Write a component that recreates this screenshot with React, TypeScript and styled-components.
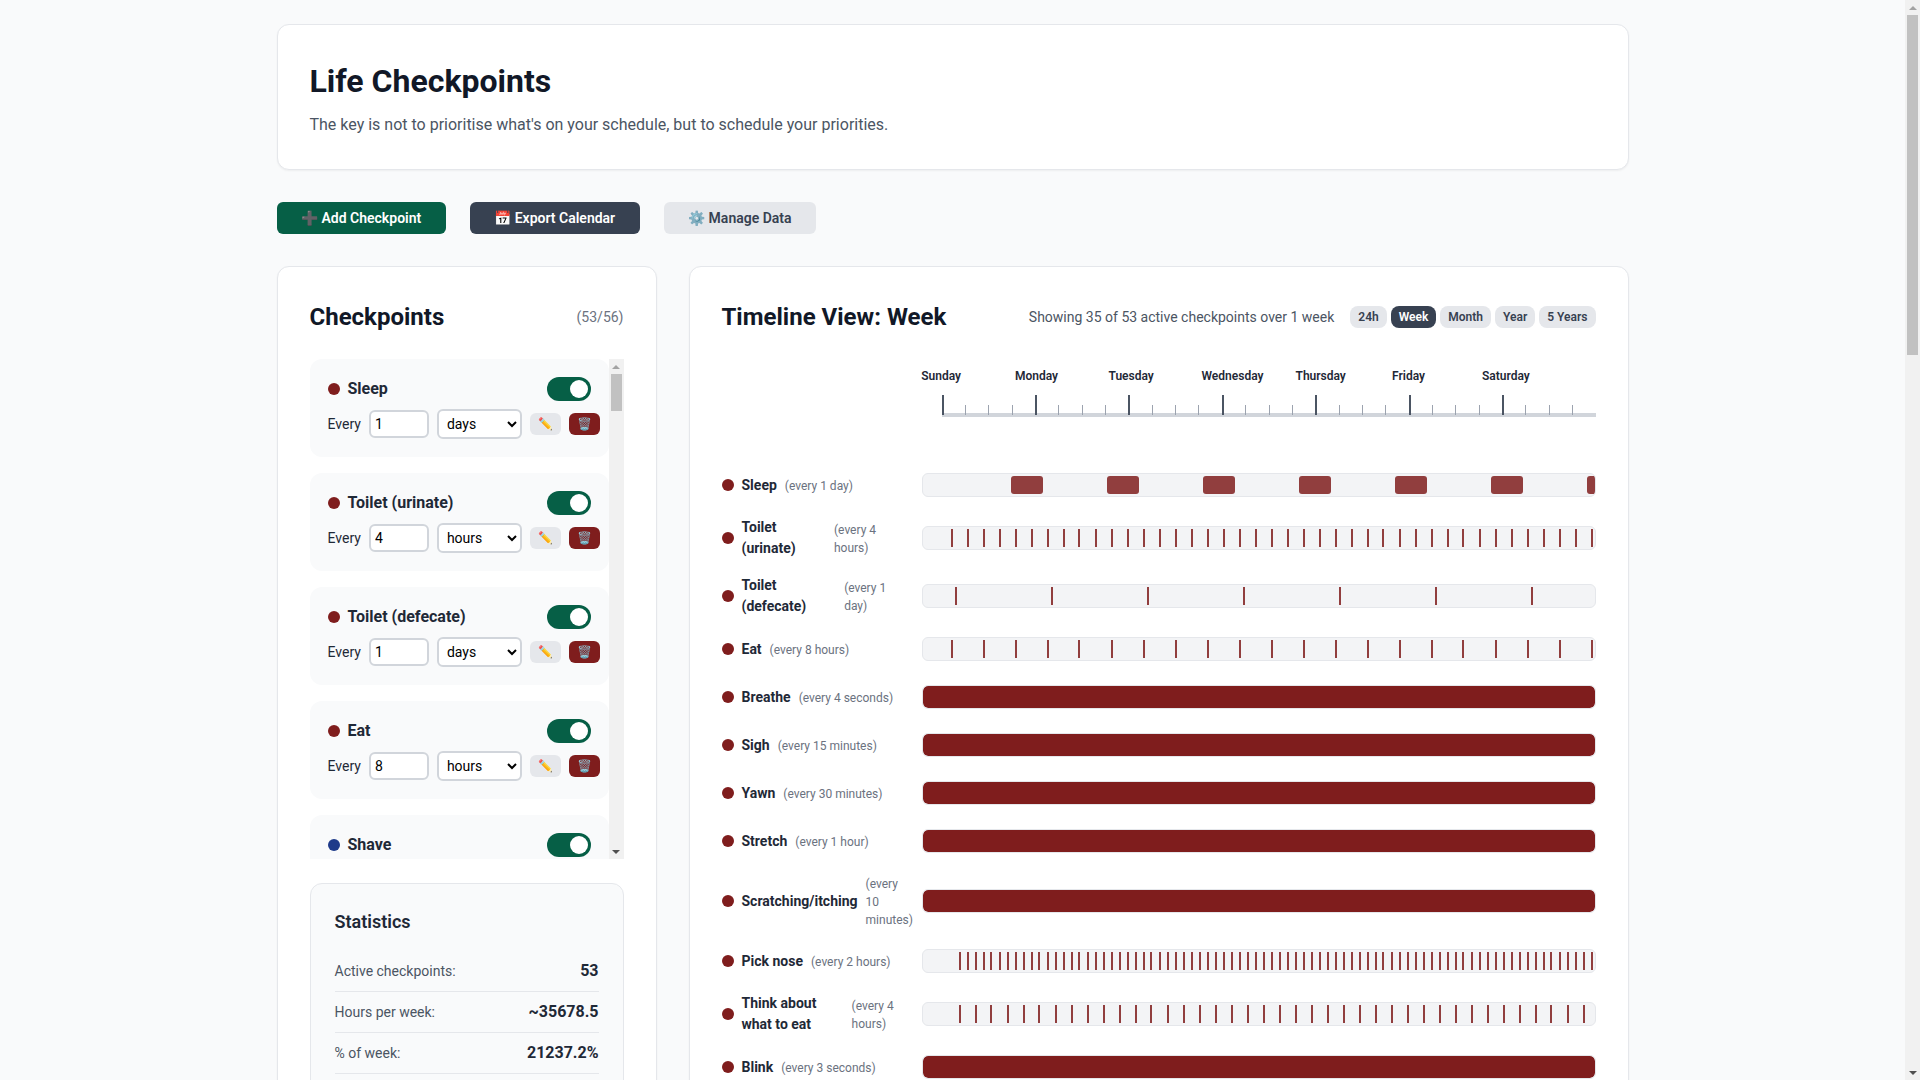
import React from "react";
import styled, { createGlobalStyle } from "styled-components";

const Global = createGlobalStyle`
  html { scrollbar-width: none; }
  html, body { margin: 0; padding: 0; }
  * { box-sizing: border-box; }
  body {
    padding-right: 15px;
    background: #f9fafb;
    color: #1f2937;
    font-family: Roboto, "Noto Sans", sans-serif;
    font-size: 16px;
    line-height: 1.5;
  }
`;

const Page = styled.div`
  max-width: 1400px;
  margin: 0 auto;
  padding: 24px;
`;

const ScrollRail = styled.div`
  flex: none;
  display: flex;
  flex-direction: column;
  width: 15px;
  background: #f1f1f1;
`;

const WindowRail = styled(ScrollRail)`
  position: fixed;
  top: 0;
  right: 0;
  bottom: 0;
`;

const RailArrow = styled.div<{ $down?: boolean }>`
  flex: none;
  display: flex;
  align-items: center;
  justify-content: center;
  height: 15px;

  &::after {
    content: "";
    border-left: 4px solid transparent;
    border-right: 4px solid transparent;
    ${(p) => (p.$down ? "border-top: 4px solid #505050;" : "border-bottom: 4px solid #a3a3a3;")}
  }
`;

const RailSpace = styled.div`
  flex: 1;
`;

const RailThumb = styled.div<{ $height: number }>`
  height: ${(p) => p.$height}px;
  margin: 0 2px;
  background: #c1c1c1;
`;

const Card = styled.section`
  background: #fff;
  border: 1px solid #e5e7eb;
  border-radius: 12px;
  padding: 32px;
  box-shadow: 0 1px 2px rgba(0, 0, 0, 0.05);
`;

const HeaderCard = styled(Card)`
  margin-bottom: 32px;
`;

const TimelineCard = styled(Card)`
  min-height: 3045px;
`;

const Title = styled.h1`
  margin: 0 0 8px;
  font-size: 32px;
  line-height: 48px;
  font-weight: 700;
  color: #111827;
`;

const Tagline = styled.p`
  margin: 0;
  font-size: 16px;
  line-height: 24px;
  color: #4b5563;
`;

const Actions = styled.div`
  display: flex;
  gap: 24px;
  margin-bottom: 32px;
`;

const ActionButton = styled.button<{ $bg: string; $fg: string }>`
  height: 32px;
  padding: 0 24.5px;
  border: 0;
  border-radius: 6px;
  background: ${(p) => p.$bg};
  color: ${(p) => p.$fg};
  font-family: inherit;
  font-size: 14px;
  font-weight: 600;
  line-height: 21px;
`;

const Columns = styled.div`
  display: grid;
  grid-template-columns: 380px 1fr;
  gap: 32px;
`;

const PanelHead = styled.div`
  display: flex;
  align-items: center;
  justify-content: space-between;
  height: 36px;
  margin-bottom: 24px;
`;

const PanelTitle = styled.h2`
  margin: 0;
  font-size: 24px;
  line-height: 36px;
  font-weight: 700;
  color: #111827;
`;

const Count = styled.span`
  font-size: 14px;
  color: #6b7280;
`;

const ListFrame = styled.div`
  display: flex;
  height: 500px;
  margin-bottom: 24px;
`;

const List = styled.div`
  flex: 1;
  min-width: 0;
  overflow-y: auto;
  overflow-x: hidden;
  scrollbar-width: none;
`;

const Item = styled.div`
  height: 98px;
  padding: 18px;
  margin-bottom: 16px;
  background: #f9fafb;
  border-radius: 12px;
`;

const ItemTop = styled.div`
  display: flex;
  align-items: center;
  justify-content: space-between;
  height: 24px;
  margin-bottom: 8px;
`;

const ItemName = styled.div`
  display: flex;
  align-items: center;
  gap: 8px;
  font-size: 16px;
  font-weight: 700;
  color: #1f2937;
`;

const Dot = styled.span<{ $color: string }>`
  flex: none;
  width: 12px;
  height: 12px;
  border-radius: 50%;
  background: ${(p) => p.$color};
`;

const Switch = styled.span<{ $on: boolean }>`
  display: flex;
  justify-content: ${(p) => (p.$on ? "flex-end" : "flex-start")};
  align-items: center;
  width: 44px;
  height: 24px;
  padding: 3px;
  border-radius: 12px;
  background: ${(p) => (p.$on ? "#065f46" : "#d1d5db")};

  &::after {
    content: "";
    width: 18px;
    height: 18px;
    border-radius: 50%;
    background: #fff;
  }
`;

const ItemControls = styled.div`
  display: flex;
  align-items: center;
  gap: 8px;
  height: 30px;
  font-size: 14px;
  white-space: nowrap;
  color: #1f2937;
`;

const EveryInput = styled.input`
  flex: none;
  width: 60px;
  height: 28px;
  padding: 4px;
  border: 2px solid #d1d5db;
  border-radius: 6px;
  background: #fff;
  color: #000;
  font-family: inherit;
  font-size: 14px;
`;

const UnitSelect = styled.select`
  flex: none;
  width: 85px;
  height: 30px;
  padding: 4px;
  border: 2px solid #d1d5db;
  border-radius: 6px;
  background: #fff;
  color: #000;
  font-family: inherit;
  font-size: 14px;
`;

const IconButton = styled.button<{ $danger?: boolean }>`
  flex: none;
  width: 31px;
  height: 22px;
  padding: 0;
  border: 0;
  border-radius: 6px;
  background: ${(p) => (p.$danger ? "#7f1d1d" : "#e5e7eb")};
  font-family: inherit;
  font-size: 12px;
  line-height: 18px;
`;

const Stats = styled.div`
  padding: 24px;
  background: #f9fafb;
  border: 1px solid #e5e7eb;
  border-radius: 12px;
`;

const StatsTitle = styled.h3`
  margin: 0 0 16px;
  font-size: 18px;
  line-height: 27px;
  font-weight: 600;
  color: #1f2937;
`;

const StatRow = styled.div`
  display: flex;
  align-items: center;
  justify-content: space-between;
  padding: 8px 0;
  border-bottom: 1px solid #e5e7eb;
`;

const StatLabel = styled.span`
  font-size: 14px;
  color: #4b5563;
`;

const StatValue = styled.span`
  font-size: 16px;
  font-weight: 700;
  color: #1f2937;
`;

const TimelineRight = styled.div`
  display: flex;
  align-items: center;
  gap: 16px;
  font-size: 14px;
  color: #4b5563;
`;

const Pills = styled.div`
  display: flex;
  gap: 4px;
`;

const Pill = styled.button<{ $active?: boolean }>`
  height: 22px;
  padding: 0 8px;
  border: 0;
  border-radius: 8px;
  background: ${(p) => (p.$active ? "#374151" : "#e5e7eb")};
  color: ${(p) => (p.$active ? "#fff" : "#374151")};
  font-family: inherit;
  font-size: 12px;
  font-weight: 600;
  line-height: 18px;
`;

const Axis = styled.div`
  position: relative;
  height: 94px;
  margin: 0 0 16px 220px;
`;

const DayLabel = styled.span`
  position: absolute;
  top: 8px;
  font-size: 12px;
  font-weight: 600;
  line-height: 18px;
  color: #1f2937;
  white-space: nowrap;
`;

const AxisLine = styled.div`
  position: absolute;
  top: 54px;
  left: 0;
  right: 0;
  height: 4px;
  background: #d1d5db;
`;

const AxisTick = styled.span<{ $major: boolean }>`
  position: absolute;
  top: ${(p) => (p.$major ? 36 : 46)}px;
  width: ${(p) => (p.$major ? 2 : 1)}px;
  height: ${(p) => (p.$major ? 20 : 10)}px;
  background: ${(p) => (p.$major ? "#4b5563" : "#9ca3af")};
`;

const Row = styled.div`
  display: flex;
  align-items: center;
  min-height: 32px;
  margin-bottom: 16px;
`;

const RowLabel = styled.div`
  flex: none;
  display: flex;
  align-items: center;
  gap: 8px;
  width: 185px;
  margin-right: 15px;
`;

const RowName = styled.span`
  font-size: 14px;
  font-weight: 700;
  color: #1f2937;
`;

const RowEvery = styled.span`
  padding: 2px 0 0;
  font-size: 12px;
  color: #6b7280;
`;

const Track = styled.div`
  position: relative;
  flex: 1;
  height: 24px;
  overflow: hidden;
  background: #f3f4f6;
  border: 1px solid #e5e7eb;
  border-radius: 6px;
`;

const FullBar = styled.div`
  height: 100%;
  border-radius: 5px;
  background: #7f1d1d;
`;

const Mark = styled.span`
  position: absolute;
  top: 2px;
  bottom: 2px;
  background: #7f1d1d;
  opacity: 0.85;
`;

const Tick = styled(Mark)`
  width: 2px;
`;

const Block = styled(Mark)`
  border-radius: 3px;
`;

const RED = "#7f1d1d";
const BLUE = "#1e3a8a";
const GREEN = "#065f46";

type Cp = { name: string; n: number; unit: string; color: string; on?: boolean };

const checkpoints: Cp[] = [
  { name: "Sleep", n: 1, unit: "days", color: RED },
  { name: "Toilet (urinate)", n: 4, unit: "hours", color: RED },
  { name: "Toilet (defecate)", n: 1, unit: "days", color: RED },
  { name: "Eat", n: 8, unit: "hours", color: RED },
  { name: "Shave", n: 2, unit: "days", color: BLUE },
  ...[
    "Shower", "Brush teeth", "Floss", "Exercise", "Walk", "Drink water", "Read", "Meditate", "Call family",
    "Cook", "Clean kitchen", "Laundry", "Vacuum", "Groceries", "Pay bills", "Haircut", "Dentist", "Doctor",
    "Change sheets", "Water plants", "Take out trash", "Journal", "Stretch legs", "Trim nails", "Backup files",
    "Car service", "Eye test", "Clean windows", "Meet friends", "Plan week", "Review goals", "Tidy desk",
    "Wash car", "Change filters", "Sharpen knives", "Defrost freezer", "Check smoke alarm", "Update passwords",
    "Renew passport", "Tax return", "Holiday", "Learn a skill", "Declutter", "Donate clothes", "Visit parents",
    "Sunbathe", "Garden", "Yoga", "Run", "Swim", "Nap",
  ].map((name, i) => ({
    name,
    n: (i % 6) + 1,
    unit: ["days", "weeks", "months"][i % 3],
    color: [BLUE, GREEN, RED][i % 3],
    on: i % 17 !== 16,
  })),
];

type Tl = { name: string; every: string; full?: boolean; start?: number; step?: number; count?: number; block?: boolean };

const timeline: Tl[] = [
  { name: "Sleep", every: "every 1 day", block: true, start: 88, step: 96, count: 7 },
  { name: "Toilet (urinate)", every: "every 4 hours", start: 28, step: 16, count: 41 },
  { name: "Toilet (defecate)", every: "every 1 day", start: 32, step: 96, count: 7 },
  { name: "Eat", every: "every 8 hours", start: 28, step: 32, count: 21 },
  { name: "Breathe", every: "every 4 seconds", full: true },
  { name: "Sigh", every: "every 15 minutes", full: true },
  { name: "Yawn", every: "every 30 minutes", full: true },
  { name: "Stretch", every: "every 1 hour", full: true },
  { name: "Scratching/itching", every: "every 10 minutes", full: true },
  { name: "Pick nose", every: "every 2 hours", start: 36, step: 8, count: 80 },
  { name: "Think about what to eat", every: "every 4 hours", start: 36, step: 16, count: 40 },
  { name: "Blink", every: "every 3 seconds", full: true },
  ...[
    "Shave", "Shower", "Brush teeth", "Floss", "Exercise", "Walk", "Drink water", "Read", "Meditate", "Call family",
    "Cook", "Clean kitchen", "Laundry", "Vacuum", "Groceries", "Pay bills", "Journal", "Plan week", "Review goals",
    "Tidy desk", "Water plants", "Take out trash", "Change sheets",
  ].map((name) => ({ name, every: "every 1 day", start: 32, step: 96, count: 7 })),
];

const TRACK = 672;
const pct = (px: number) => `${(px / TRACK) * 100}%`;
const days: [string, number][] = [
  ["Sunday", -20.3],
  ["Monday", 73.5],
  ["Tuesday", 167],
  ["Wednesday", 260],
  ["Thursday", 354],
  ["Friday", 450.5],
  ["Saturday", 540.5],
];
const ranges = ["24h", "Week", "Month", "Year", "5 Years"];
const stats: [string, string][] = [
  ["Active checkpoints:", "53"],
  ["Hours per week:", "~35678.5"],
  ["% of week:", "21237.2%"],
  ["Longest gap:", "5 years"],
];

function TrackMarks({ row }: { row: Tl }) {
  if (row.full) return <FullBar />;
  const positions = Array.from({ length: row.count ?? 0 }, (_, i) => (row.start ?? 0) + i * (row.step ?? 0));
  return (
    <>
      {positions.map((x) =>
        row.block ? (
          <Block key={x} style={{ left: pct(x), width: pct(32) }} />
        ) : (
          <Tick key={x} style={{ left: pct(x) }} />
        )
      )}
    </>
  );
}

function RailParts({ thumb }: { thumb: number }) {
  return (
    <>
      <RailArrow />
      <RailThumb $height={thumb} />
      <RailSpace />
      <RailArrow $down />
    </>
  );
}

export default function App() {
  return (
    <Page>
      <Global />
      <WindowRail>
        <RailParts thumb={340} />
      </WindowRail>
      <HeaderCard>
        <Title>Life Checkpoints</Title>
        <Tagline>The key is not to prioritise what's on your schedule, but to schedule your priorities.</Tagline>
      </HeaderCard>

      <Actions>
        <ActionButton $bg="#065f46" $fg="#fff">➕ Add Checkpoint</ActionButton>
        <ActionButton $bg="#374151" $fg="#fff">📅 Export Calendar</ActionButton>
        <ActionButton $bg="#e5e7eb" $fg="#374151">⚙️ Manage Data</ActionButton>
      </Actions>

      <Columns>
        <Card as="aside">
          <PanelHead>
            <PanelTitle>Checkpoints</PanelTitle>
            <Count>(53/56)</Count>
          </PanelHead>
          <ListFrame>
            <List>
              {checkpoints.map((c) => (
                <Item key={c.name}>
                  <ItemTop>
                    <ItemName>
                      <Dot $color={c.color} />
                      {c.name}
                    </ItemName>
                    <Switch $on={c.on !== false} />
                  </ItemTop>
                  <ItemControls>
                    Every
                    <EveryInput type="number" defaultValue={c.n} />
                    <UnitSelect defaultValue={c.unit}>
                      <option value="minutes">minutes</option>
                      <option value="hours">hours</option>
                      <option value="days">days</option>
                      <option value="weeks">weeks</option>
                      <option value="months">months</option>
                      <option value="years">years</option>
                    </UnitSelect>
                    <IconButton>✏️</IconButton>
                    <IconButton $danger>🗑️</IconButton>
                  </ItemControls>
                </Item>
              ))}
            </List>
            <ScrollRail>
              <RailParts thumb={37} />
            </ScrollRail>
          </ListFrame>
          <Stats>
            <StatsTitle>Statistics</StatsTitle>
            {stats.map(([label, value]) => (
              <StatRow key={label}>
                <StatLabel>{label}</StatLabel>
                <StatValue>{value}</StatValue>
              </StatRow>
            ))}
          </Stats>
        </Card>

        <TimelineCard>
          <PanelHead>
            <PanelTitle>Timeline View: Week</PanelTitle>
            <TimelineRight>
              <span>Showing 35 of 53 active checkpoints over 1 week</span>
              <Pills>
                {ranges.map((r) => (
                  <Pill key={r} $active={r === "Week"}>{r}</Pill>
                ))}
              </Pills>
            </TimelineRight>
          </PanelHead>

          <Axis>
            {days.map(([d, x]) => (
              <DayLabel key={d} style={{ left: x }}>{d}</DayLabel>
            ))}
            <AxisLine />
            {Array.from({ length: 28 }, (_, i) => (
              <AxisTick key={i} $major={i % 4 === 0} style={{ left: `${(i / 28) * 100}%` }} />
            ))}
          </Axis>

          {timeline.map((row) => (
            <Row key={row.name}>
              <RowLabel>
                <Dot $color={RED} />
                <RowName>{row.name}</RowName>
                <RowEvery>({row.every})</RowEvery>
              </RowLabel>
              <Track>
                <TrackMarks row={row} />
              </Track>
            </Row>
          ))}
        </TimelineCard>
      </Columns>
    </Page>
  );
}
